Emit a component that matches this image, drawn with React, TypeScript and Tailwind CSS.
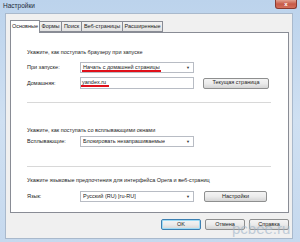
import React from "react";

const font = { fontFamily: '"Liberation Sans", Arial, sans-serif' };

function Select({ children, w = "w-[114px]" }: { children: React.ReactNode; w?: string }) {
  return (
    <div className={`${w} h-[11px] border border-[#b8bcc4] bg-white flex items-center pl-[2px] pr-[3px] justify-between`}>
      <span className="text-[5.5px] leading-[7px] text-[#222] whitespace-nowrap overflow-hidden">{children}</span>
      <span className="text-[4px] leading-none text-[#333]">▼</span>
    </div>
  );
}

function Btn({ children, w = "w-[66px]", focus = false }: { children: React.ReactNode; w?: string; focus?: boolean }) {
  return (
    <div
      className={`${w} h-[11px] rounded-[2px] border ${focus ? "border-[#3c7fb1] shadow-[inset_0_0_0_1px_#9fdcf6]" : "border-[#8e8f8f]"} bg-gradient-to-b from-[#f4f4f4] via-[#ebebeb] to-[#d5d5d5] flex items-center justify-center text-[5.5px] leading-none text-[#222]`}
    >
      {children}
    </div>
  );
}

export default function App() {
  return (
    <div className="w-[300px] h-[242px] relative overflow-hidden bg-gradient-to-b from-[#bcd3ec] via-[#cfe0f2] to-[#c6d9ee]" style={font}>
      {/* title bar */}
      <div className="h-[13px] flex items-center pl-[3px]">
        <span className="text-[6.5px] leading-none text-[#1e2a3a]">Настройки</span>
      </div>
      <div className="absolute right-[3px] top-0 w-[22px] h-[9px] rounded-b-[3px] border border-t-0 border-[#8a3a30] bg-gradient-to-b from-[#e0a090] via-[#c75a48] to-[#d3705c] flex items-center justify-center">
        <span className="text-[6px] leading-none font-bold text-white">x</span>
      </div>

      {/* dialog body */}
      <div className="ml-[5px] mr-[7px] h-[226px] bg-[#f0f0f0] border border-[#a9b9cc] flex flex-col">
        {/* tabs */}
        <div className="mt-[5px] ml-[4px] flex items-end h-[13px] text-[5.5px] leading-none text-[#222]">
          <div className="h-[13px] w-[30px] bg-white border border-b-0 border-[#898c95] flex items-center justify-center relative z-10 -mb-[1px]">Основные</div>
          <div className="h-[11px] w-[22px] bg-gradient-to-b from-[#f3f3f3] to-[#e2e2e2] border border-l-0 border-[#898c95] flex items-center justify-center">Формы</div>
          <div className="h-[11px] w-[20px] bg-gradient-to-b from-[#f3f3f3] to-[#e2e2e2] border border-l-0 border-[#898c95] flex items-center justify-center">Поиск</div>
          <div className="h-[11px] w-[41px] bg-gradient-to-b from-[#f3f3f3] to-[#e2e2e2] border border-l-0 border-[#898c95] flex items-center justify-center">Веб-страницы</div>
          <div className="h-[11px] w-[40px] bg-gradient-to-b from-[#f3f3f3] to-[#e2e2e2] border border-l-0 border-[#898c95] flex items-center justify-center">Расширенные</div>
        </div>

        {/* panel */}
        <div className="ml-[4px] w-[279px] h-[181px] bg-white border border-[#898c95] pl-[16px] text-[5.5px] leading-[7px] text-[#222]">
          <div className="mt-[16px] whitespace-nowrap">Укажите, как поступать браузеру при запуске</div>
          <div className="mt-[6px] flex items-center">
            <span className="w-[53px]">При запуске:</span>
            <div className="w-[114px] h-[11px] border border-[#b8bcc4] bg-white flex items-center pl-[1px] pr-[3px] justify-between">
              <span className="whitespace-nowrap border-b-2 border-[#e0101a] leading-[6px] pl-[1px] pr-[1px]">Начать с домашней страницы</span>
              <span className="text-[4px] leading-none text-[#333]">▼</span>
            </div>
          </div>
          <div className="mt-[4px] flex items-center">
            <span className="w-[53px]">Домашняя:</span>
            <div className="w-[114px] h-[12px] border border-[#b8bcc4] bg-white flex items-center pl-[0px]">
              <span className="whitespace-nowrap border-b-2 border-[#e0101a] leading-[6px] pl-[1px] pr-[3px]">yandex.ru</span>
            </div>
            <div className="ml-[9px]">
              <Btn>Текущая страница</Btn>
            </div>
          </div>
          <div className="mt-[13px] w-[244px] h-px bg-[#d8d8d8]"></div>

          <div className="mt-[24px] whitespace-nowrap">Укажите, как поступать со всплывающими окнами</div>
          <div className="mt-[2px] flex items-center">
            <span className="w-[53px]">Всплывающие:</span>
            <Select>Блокировать незапрашиваемые</Select>
          </div>
          <div className="mt-[19px] w-[244px] h-px bg-[#d8d8d8]"></div>

          <div className="mt-[10px] whitespace-nowrap">Укажите языковые предпочтения для интерфейса Opera и веб-страниц</div>
          <div className="mt-[7px] flex items-center">
            <span className="w-[53px]">Язык:</span>
            <Select>Русский (RU) [ru-RU]</Select>
            <div className="ml-[10px]">
              <Btn w="w-[63px]">Настройки</Btn>
            </div>
          </div>
        </div>

        {/* bottom buttons */}
        <div className="mt-[6px] ml-[155px] flex gap-[4px]">
          <Btn w="w-[40px]" focus>OK</Btn>
          <Btn w="w-[40px]">Отмена</Btn>
          <Btn w="w-[40px]">Справка</Btn>
        </div>
      </div>

      {/* watermark */}
      <div className="absolute left-[232px] top-[221px] text-[15px] leading-none text-[#9fb4c8] opacity-60" style={{ fontFamily: '"Liberation Sans", sans-serif' }}>
        pcbee.ru
      </div>
    </div>
  );
}
